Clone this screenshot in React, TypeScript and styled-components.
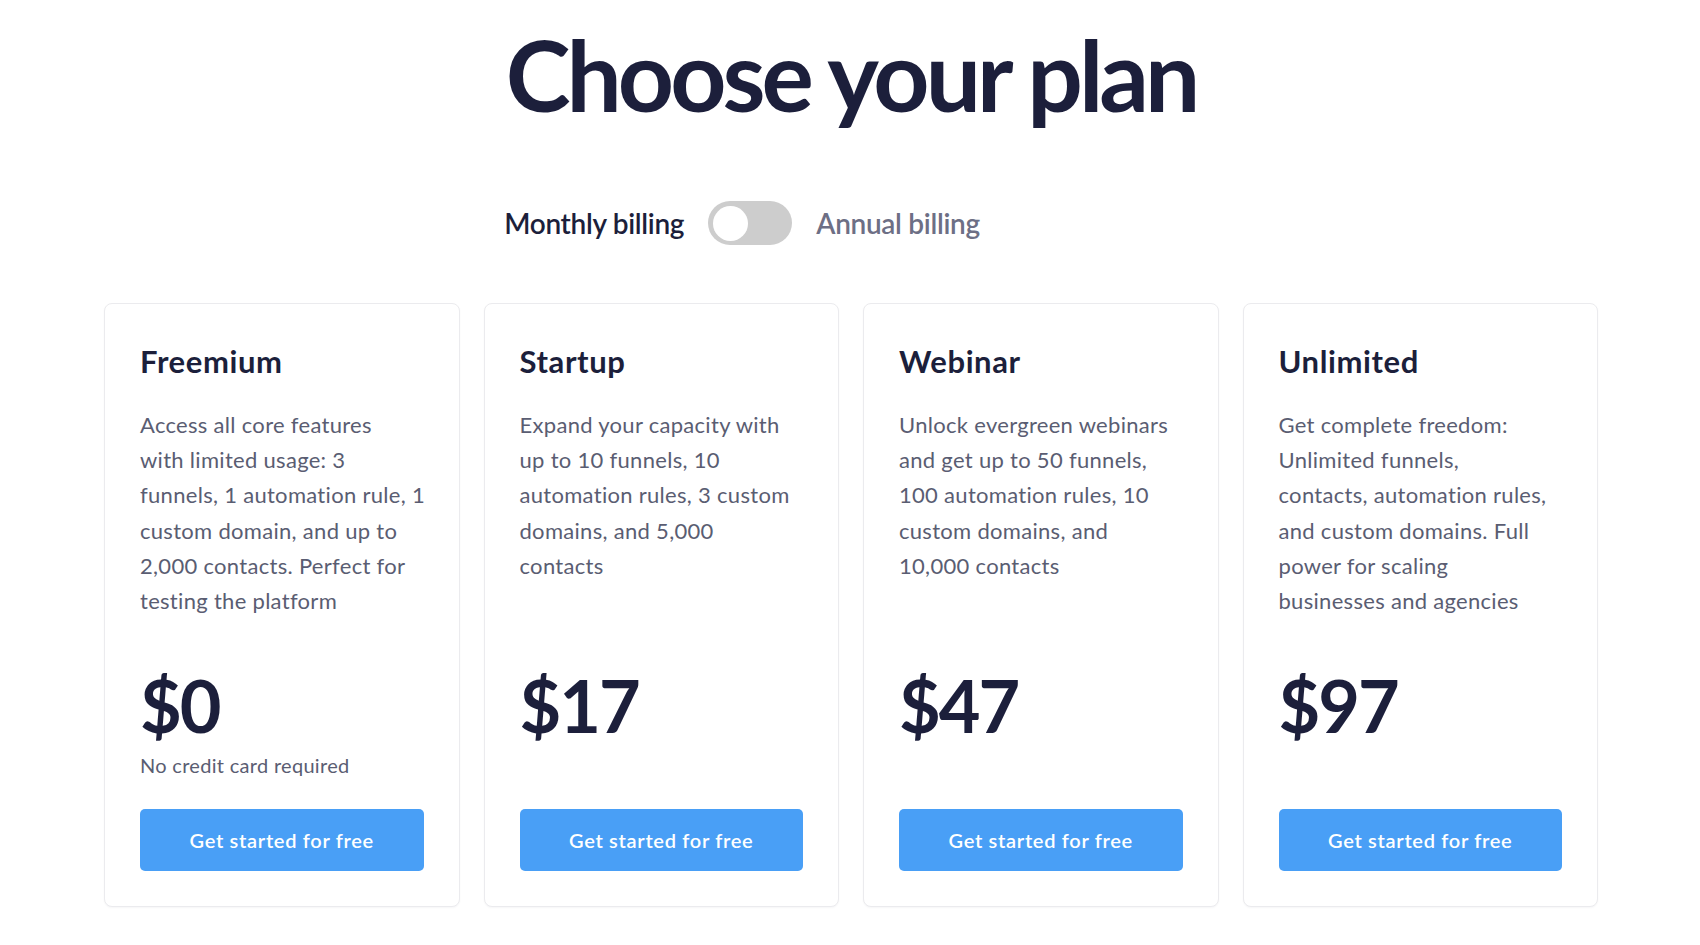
import React from 'react';
import styled, { createGlobalStyle } from 'styled-components';

const GlobalStyle = createGlobalStyle`
  * { box-sizing: border-box; }
  html, body { margin: 0; padding: 0; background: #ffffff; }
  body {
    font-family: Lato, "Noto Sans", sans-serif;
    color: #1c1f3b;
    -webkit-font-smoothing: antialiased;
  }
`;

type Plan = {
  name: string;
  lines: string[];
  price: string;
  note?: string;
};

const plans: Plan[] = [
  {
    name: 'Freemium',
    lines: [
      'Access all core features',
      'with limited usage: 3',
      'funnels, 1 automation rule, 1',
      'custom domain, and up to',
      '2,000 contacts. Perfect for',
      'testing the platform',
    ],
    price: '$0',
    note: 'No credit card required',
  },
  {
    name: 'Startup',
    lines: [
      'Expand your capacity with',
      'up to 10 funnels, 10',
      'automation rules, 3 custom',
      'domains, and 5,000',
      'contacts',
    ],
    price: '$17',
  },
  {
    name: 'Webinar',
    lines: [
      'Unlock evergreen webinars',
      'and get up to 50 funnels,',
      '100 automation rules, 10',
      'custom domains, and',
      '10,000 contacts',
    ],
    price: '$47',
  },
  {
    name: 'Unlimited',
    lines: [
      'Get complete freedom:',
      'Unlimited funnels,',
      'contacts, automation rules,',
      'and custom domains. Full',
      'power for scaling',
      'businesses and agencies',
    ],
    price: '$97',
  },
];

export default function App() {
  return (
    <>
      <GlobalStyle />
      <Page>
        <Heading>Choose your plan</Heading>

        <ToggleRow>
          <BillingLabel active>Monthly billing</BillingLabel>
          <Switch>
            <Knob />
          </Switch>
          <BillingLabel>Annual billing</BillingLabel>
        </ToggleRow>

        <Cards>
          {plans.map(plan => (
            <Card key={plan.name}>
              <PlanName>{plan.name}</PlanName>
              <Description>
                {plan.lines.map(line => (
                  <Line key={line}>{line}</Line>
                ))}
              </Description>
              <Price>{plan.price}</Price>
              <Note>{plan.note ?? ''}</Note>
              <CtaButton>Get started for free</CtaButton>
            </Card>
          ))}
        </Cards>
      </Page>
    </>
  );
}

const Page = styled.main`
  width: 1700px;
  min-height: 945px;
  display: flex;
  flex-direction: column;
  align-items: center;
  padding: 25px 102px 0 104px;
`;

const Heading = styled.h1`
  margin: 0;
  font-size: 98px;
  line-height: 1;
  font-weight: 700;
  letter-spacing: -4px;
  color: #1c1f3b;
`;

const ToggleRow = styled.div`
  display: flex;
  align-items: center;
  gap: 24px;
  margin-top: 78px;
  padding-right: 218px;
  height: 44px;
`;

const BillingLabel = styled.span<{ active?: boolean }>`
  font-size: 28px;
  font-weight: 600;
  letter-spacing: -0.3px;
  color: ${p => (p.active ? '#1c1f3b' : '#6d6f85')};
`;

const Switch = styled.div`
  width: 84px;
  height: 44px;
  border-radius: 22px;
  background: #cdcdcd;
  display: flex;
  align-items: center;
  padding: 0 5px;
`;

const Knob = styled.div`
  width: 35px;
  height: 35px;
  border-radius: 50%;
  background: #ffffff;
`;

const Cards = styled.section`
  width: 100%;
  margin-top: 58px;
  display: grid;
  grid-template-columns: repeat(4, minmax(0, 1fr));
  gap: 24px;
`;

const Card = styled.article`
  min-width: 0;
  display: flex;
  flex-direction: column;
  padding: 39px 35px 35px;
  border: 1px solid #ebebee;
  border-radius: 8px;
  background: #ffffff;
  box-shadow: 0 1px 2px rgba(20, 20, 40, 0.04);
`;

const PlanName = styled.h2`
  margin: 0;
  font-size: 31px;
  line-height: 36px;
  font-weight: 700;
  letter-spacing: 0.6px;
  color: #1c1f3b;
`;

const Description = styled.p`
  margin: 28px 0 0;
  flex: 1;
  font-size: 22px;
  line-height: 35.2px;
  letter-spacing: 0.3px;
  color: #5a5d72;
`;

const Line = styled.span`
  display: block;
  white-space: nowrap;
`;

const Price = styled.div`
  margin-top: 51px;
  font-size: 72px;
  line-height: 72px;
  font-weight: 700;
  letter-spacing: -2px;
  color: #1c1f3b;
`;

const Note = styled.div`
  margin-top: 10px;
  min-height: 28px;
  font-size: 20px;
  line-height: 28px;
  letter-spacing: 0.3px;
  color: #5a5d72;
`;

const CtaButton = styled.button`
  margin-top: 30px;
  height: 62px;
  width: 100%;
  border: none;
  border-radius: 5px;
  background: #499ff6;
  color: #ffffff;
  font-family: inherit;
  font-size: 20px;
  font-weight: 600;
  letter-spacing: 0.7px;
  cursor: pointer;
`;
